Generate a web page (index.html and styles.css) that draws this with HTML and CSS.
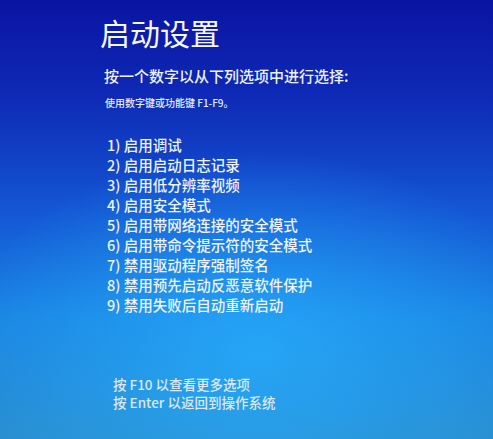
FILE: index.html
```html
<!DOCTYPE html>
<html lang="zh-CN">
<head>
<meta charset="utf-8">
<title>启动设置</title>
<link rel="stylesheet" href="styles.css">
</head>
<body>
<main class="screen">
  <h1 class="title">启动设置</h1>
  <p class="subtitle">按一个数字以从下列选项中进行选择:</p>
  <p class="hint">使用数字键或功能键 F1-F9。</p>
  <ol class="options">
    <li>1) 启用调试</li>
    <li>2) 启用启动日志记录</li>
    <li>3) 启用低分辨率视频</li>
    <li>4) 启用安全模式</li>
    <li>5) 启用带网络连接的安全模式</li>
    <li>6) 启用带命令提示符的安全模式</li>
    <li>7) 禁用驱动程序强制签名</li>
    <li>8) 禁用预先启动反恶意软件保护</li>
    <li>9) 禁用失败后自动重新启动</li>
  </ol>
  <div class="footer">
    <p>按 F10 以查看更多选项</p>
    <p>按 Enter 以返回到操作系统</p>
  </div>
</main>
</body>
</html>
```

FILE: styles.css
```css
html, body {
  margin: 0;
  padding: 0;
  width: 493px;
  height: 439px;
  overflow: hidden;
}

body {
  font-family: "Noto Sans CJK SC", "Noto Sans", sans-serif;
  color: #eef3ff;
  background:
    radial-gradient(ellipse 300px 200px at 52% 80%, rgba(40, 175, 255, 0.75) 0%, rgba(40, 175, 255, 0) 100%),
    linear-gradient(to bottom, #0a14a2 0%, #0e2ab6 22%, #1456d4 48%, #1a84e2 72%, #2a8ecf 100%);
}

.screen {
  padding: 12px 0 0 100px;
}

.title {
  margin: 0;
  font-size: 30px;
  line-height: 40px;
  font-weight: 400;
  color: #f4f7ff;
}

.subtitle {
  margin: 14px 0 0 4px;
  font-size: 15px;
  line-height: 20px;
  font-weight: 500;
  color: #eef2ff;
}

.hint {
  margin: 11px 0 0 5px;
  font-size: 10px;
  line-height: 12px;
  font-weight: 500;
  color: #e4ecff;
}

.options {
  list-style: none;
  margin: 26px 0 0 7px;
  padding: 0;
  font-size: 14.5px;
  line-height: 20px;
  font-weight: 500;
  color: #eef4ff;
}

.footer {
  margin: 60px 0 0 13px;
  font-size: 13.5px;
  line-height: 18px;
  font-weight: 500;
  color: #dbe8f6;
}

.footer p {
  margin: 0;
}
```
